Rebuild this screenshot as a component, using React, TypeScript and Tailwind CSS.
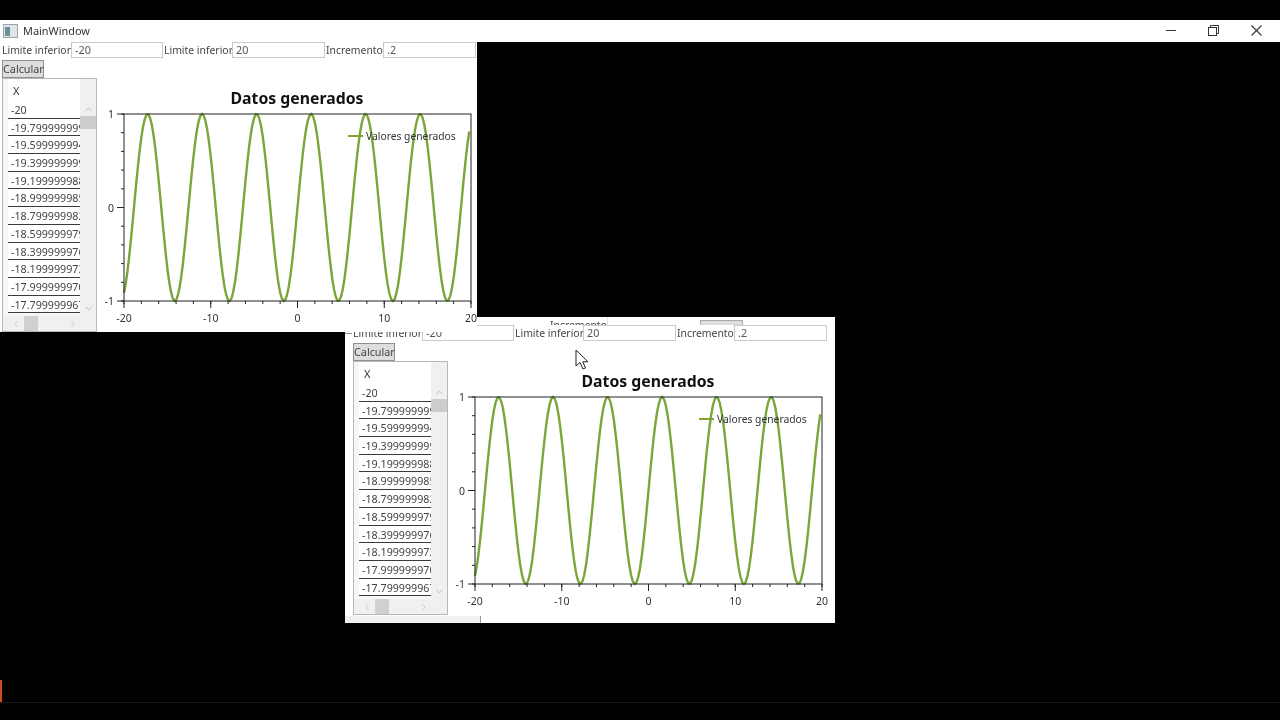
import React from "react";
import { ChevronUp, ChevronDown, ChevronLeft, ChevronRight } from "lucide-react";

const ROWS = [
  "-20",
  "-19.799999999",
  "-19.599999994",
  "-19.399999999",
  "-19.199999988",
  "-18.999999985",
  "-18.799999982",
  "-18.599999979",
  "-18.399999976",
  "-18.199999973",
  "-17.999999970",
  "-17.799999967",
];

const FONT = "font-['Noto_Sans','Open_Sans',sans-serif]";

function Input({ value, w }: { value: string; w: string }) {
  return (
    <div className={`${w} h-[16px] border border-[#c8cacd] bg-white pl-[3px] text-[10.8px] leading-[14px] text-[#555]`}>
      {value}
    </div>
  );
}

function Grid() {
  return (
    <div className="w-[95px] h-[254px] ml-[2px] border border-[#b4b8c0] bg-[#f6f6f6] flex flex-col overflow-hidden">
      <div className="flex flex-1 min-h-0">
        <div className="w-[77px] pl-[5px] flex flex-col">
          <div className="h-[22px] pl-[5px] pt-[4px] text-[11px] leading-[16px] text-[#333] bg-white">X</div>
          {ROWS.map((r) => (
            <div
              key={r}
              className="h-[17.7px] shrink-0 pl-[3px] bg-white border-b-[1.5px] border-[#3a3a3a] overflow-hidden whitespace-nowrap text-[10.7px] leading-[18px] text-[#444]"
            >
              {r}
            </div>
          ))}
        </div>
        <div className="flex-1 bg-[#f0f0f0] flex flex-col items-center pt-[25px]">
          <ChevronUp size={11} strokeWidth={2} className="text-[#b8b8b8]" />
          <div className="w-full h-[13px] bg-[#cdcdcd] mt-[1px]" />
          <div className="flex-1" />
          <ChevronDown size={11} strokeWidth={2} className="text-[#b8b8b8] mb-[2px]" />
        </div>
      </div>
      <div className="h-[15px] shrink-0 flex items-center bg-[#f0f0f0] pl-[8px]">
        <ChevronLeft size={10} strokeWidth={2} className="text-[#c0c0c0]" />
        <div className="w-[14px] h-[15px] bg-[#d0d0d0] ml-[3px]" />
        <ChevronRight size={10} strokeWidth={2} className="text-[#c0c0c0] ml-[30px]" />
      </div>
    </div>
  );
}

function Chart() {
  const L = 27;
  const R = 374;
  const T = 36;
  const B = 223;
  const px = (x: number) => L + ((x + 20) / 40) * (R - L);
  const py = (y: number) => T + ((1 - y) / 2) * (B - T);
  const pts: string[] = [];
  for (let x = -20; x <= 19.9; x += 0.2) pts.push(`${px(x).toFixed(2)},${py(Math.sin(x)).toFixed(2)}`);
  const xMinor: number[] = [];
  for (let x = -20; x <= 20; x += 2) xMinor.push(x);
  const yMinor: number[] = [];
  for (let i = 0; i <= 10; i++) yMinor.push(-1 + i * 0.2);
  const labelCls = "fill-[#333] text-[10.5px]";
  return (
    <svg width="380" height="254" viewBox="0 0 380 254" className="block shrink-0">
      <text x="200" y="26" textAnchor="middle" className="fill-[#111] text-[15.8px] font-bold">
        Datos generados
      </text>
      <polyline points={pts.join(" ")} fill="none" stroke="#7ca53a" strokeWidth="2.4" />
      <rect x={L} y={T} width={R - L} height={B - T} fill="none" stroke="#222" strokeWidth="1" />
      {yMinor.map((y) => (
        <line key={y} x1={L - 3} x2={L} y1={py(y)} y2={py(y)} stroke="#222" />
      ))}
      {[-1, 0, 1].map((y) => (
        <g key={y}>
          <line x1={L - 7} x2={L} y1={py(y)} y2={py(y)} stroke="#222" />
          <text x={L - 10} y={py(y) + 4} textAnchor="end" className={labelCls}>
            {y}
          </text>
        </g>
      ))}
      {xMinor.map((x) => (
        <line key={x} y1={B} y2={B + 3} x1={px(x)} x2={px(x)} stroke="#222" />
      ))}
      {[-20, -10, 0, 10, 20].map((x) => (
        <g key={x}>
          <line y1={B} y2={B + 7} x1={px(x)} x2={px(x)} stroke="#222" />
          <text x={px(x)} y={B + 21} textAnchor="middle" className={labelCls}>
            {x}
          </text>
        </g>
      ))}
      <line x1="251" x2="266" y1="58" y2="58" stroke="#7ca53a" strokeWidth="2" />
      <text x="269" y="62" className="fill-[#333] text-[10.3px]">
        Valores generados
      </text>
    </svg>
  );
}

function Body() {
  return (
    <div className={`w-[477px] h-[290px] bg-white overflow-hidden ${FONT}`}>
      <div className="h-[18px] flex items-start text-[10.4px] leading-[16px] text-[#444] whitespace-nowrap">
        <span className="w-[71px] pl-[2px]">Limite inferior</span>
        <Input value="-20" w="w-[92px]" />
        <span className="w-[69px] pl-[1px]">Limite inferior</span>
        <Input value="20" w="w-[93px]" />
        <span className="w-[58px] pl-[1px]">Incremento</span>
        <Input value=".2" w="w-[93px]" />
      </div>
      <div className="h-[18px] ml-[2px] w-[42px] bg-[#dddddd] border border-[#8f8f8f] text-[10.8px] leading-[15px] text-center text-[#444]">
        Calcular
      </div>
      <div className="flex">
        <Grid />
        <Chart />
      </div>
    </div>
  );
}

export default function App() {
  return (
    <div className="relative w-[1280px] h-[720px] bg-black overflow-hidden blur-[0.4px]">
      <div className="pt-[20px] relative z-10">
        <div className={`h-[22px] bg-white flex items-center pl-[3px] pr-[18px] text-[10.9px] text-[#333] ${FONT}`}>
          <svg width="15" height="14" viewBox="0 0 15 14" className="shrink-0">
            <rect x="0.5" y="0.5" width="14" height="13" fill="#dfe6ea" stroke="#9aa4aa" />
            <rect x="2" y="3" width="5" height="9" fill="#6d8f96" />
          </svg>
          <span className="ml-[5px]">MainWindow</span>
          <div className="flex-1" />
          <svg width="10" height="10" viewBox="0 0 10 10" className="mr-[32px] mb-[2px]">
            <line x1="0" x2="10" y1="5.5" y2="5.5" stroke="#333" />
          </svg>
          <svg width="11" height="11" viewBox="0 0 11 11" className="mr-[32px] mb-[2px]">
            <rect x="0.5" y="2.5" width="8" height="8" fill="none" stroke="#333" />
            <path d="M2.5 2.5V0.5H10.5V8.5H8.5" fill="none" stroke="#333" />
          </svg>
          <svg width="11" height="11" viewBox="0 0 11 11" className="mb-[2px]">
            <path d="M0.5 0.5L10.5 10.5M10.5 0.5L0.5 10.5" stroke="#333" strokeWidth="1.1" />
          </svg>
        </div>
        <Body />
      </div>

      <div className="absolute left-[345px] top-[317px] w-[490px] h-[306px] bg-white pl-[6px] pt-[8px] overflow-hidden">
        <div className={`absolute left-[205px] top-[3px] w-[58px] h-[5px] overflow-hidden text-[10.4px] leading-[11px] text-[#444] ${FONT}`}>
          Incremento
        </div>
        <div className="absolute left-[262px] top-0 h-[8px] w-[1px] bg-[#e4e4e4]" />
        <div className="absolute left-[355px] top-[3px] w-[43px] h-[5px] bg-[#dddddd] border-x border-t border-[#a8a8a8]" />
        <Body />
        <div className="absolute left-0 top-[16px] w-[7px] h-[1px] bg-[#888]" />
        <div className="absolute left-0 bottom-0 w-[136px] h-[7px] bg-[#f0f0f0] border-r border-[#999]" />
      </div>

      <svg width="16" height="22" viewBox="0 0 16 22" className="absolute left-[575px] top-[349px] z-20">
        <path d="M1 1V17L5 13.5L8 20L10.5 19L7.8 12.8H13Z" fill="#fff" stroke="#222" strokeWidth="1" />
      </svg>

      <div className="absolute left-0 top-[680px] w-[2px] h-[23px] bg-[#c8501a]" />
      <div className="absolute left-0 top-[702px] w-full h-[1px] bg-[#1a1a1a]" />
    </div>
  );
}
